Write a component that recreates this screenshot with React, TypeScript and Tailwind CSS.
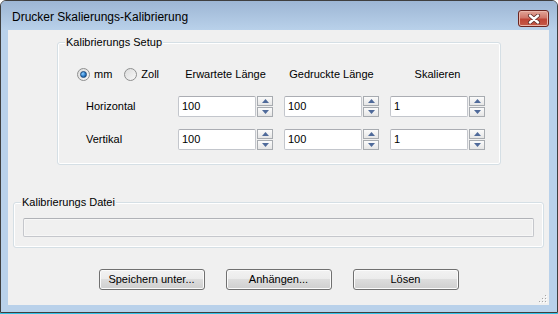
import React from 'react';

function Radio({ checked, label }: { checked?: boolean; label: string }) {
  return (
    <div className="flex items-center gap-[4px]">
      <div className="w-[13px] h-[13px] rounded-full border border-[#8e8f8f] bg-[linear-gradient(135deg,#dcdcdc,#f8f8f8)] flex items-center justify-center">
        {checked && (
          <div className="w-[7px] h-[7px] rounded-full border border-[#1c4a7c] bg-[radial-gradient(circle_at_35%_35%,#8fd0ff,#2a7ccc_55%,#143f6e)]" />
        )}
      </div>
      <span>{label}</span>
    </div>
  );
}

function Arrow({ up }: { up?: boolean }) {
  return (
    <svg width="7" height="4" viewBox="0 0 7 4">
      {up ? <path d="M0 4 L3.5 0 L7 4 Z" fill="#4f6a9a" /> : <path d="M0 0 L3.5 4 L7 0 Z" fill="#4f6a9a" />}
    </svg>
  );
}

function SpinBox({ value }: { value: string }) {
  return (
    <div className="flex items-center gap-[1px] w-[95px]">
      <div className="w-[78px] h-[21px] border border-[#c3c6cc] border-t-[#abadb3] rounded-[2px] bg-white flex items-center pl-[3px]">
        {value}
      </div>
      <div className="w-[16px] h-[21px] flex flex-col gap-[1px]">
        <div className="h-[10px] border border-[#a7abb0] bg-[linear-gradient(#fbfbfb,#e6e6e6)] flex items-center justify-center">
          <Arrow up />
        </div>
        <div className="h-[10px] border border-[#a7abb0] bg-[linear-gradient(#fbfbfb,#e6e6e6)] flex items-center justify-center">
          <Arrow />
        </div>
      </div>
    </div>
  );
}

function Button({ label }: { label: string }) {
  return (
    <button className="w-[106px] h-[21px] border border-[#707070] rounded-[3px] bg-[linear-gradient(#f2f2f2,#ebebeb_50%,#dddddd_50%,#cfcfcf)] shadow-[inset_0_0_0_1px_#fbfbfb] flex items-center justify-center text-black">
      {label}
    </button>
  );
}

export default function App() {
  return (
    <div className="w-[558px] h-[314px] bg-white font-['Liberation_Sans',Arial,sans-serif] text-[11px] leading-[13px] text-black">
      <div className="h-[313px] flex flex-col rounded-t-[6px] border border-[#3f3f3f] bg-[#b9d1ea]">
        {/* title bar */}
        <div className="h-[29px] flex items-start justify-between pt-[9px] pl-[11px] pr-[8px] rounded-t-[5px] bg-[linear-gradient(#9db6d4,#b9d1ea)]">
          <span className="text-[12px] leading-[15px]">Drucker Skalierungs-Kalibrierung</span>
          <div className="w-[31px] h-[17px] rounded-[3px] border border-[#6b2520] bg-[linear-gradient(#e2a598,#d0776a_45%,#bf4536_55%,#c55a48)] shadow-[inset_0_0_0_1px_#eab6ab] flex items-center justify-center">
            <svg width="14" height="10" viewBox="0 0 14 10">
              <path d="M3 1.5 L11 8.5 M11 1.5 L3 8.5" stroke="#5a2a26" strokeWidth="4" strokeLinecap="round" />
              <path d="M3 1.5 L11 8.5 M11 1.5 L3 8.5" stroke="#ffffff" strokeWidth="2.4" strokeLinecap="round" />
            </svg>
          </div>
        </div>

        {/* client area */}
        <div className="relative flex-1 ml-[7px] mr-[8px] mb-[7px] bg-[#f0f0f0] flex flex-col">
          {/* Kalibrierungs Setup */}
          <div className="relative mt-[12px] ml-[49px] w-[444px] h-[123px] border border-[#d5dfe5] rounded-[3px] shadow-[inset_0_0_0_1px_#ffffff] pl-[19px] pt-[20px]">
            <span className="absolute left-[7px] -top-[7px] px-[1px] bg-[#f0f0f0]">Kalibrierungs Setup</span>

            <div className="grid grid-cols-[101px_106px_106px_95px] items-center h-[22px]">
              <div className="flex items-center gap-[12px]">
                <Radio checked label="mm" />
                <Radio label="Zoll" />
              </div>
              <div className="w-[95px] text-center">Erwartete Länge</div>
              <div className="w-[95px] text-center">Gedruckte Länge</div>
              <div className="w-[95px] text-center">Skalieren</div>
            </div>

            <div className="grid grid-cols-[101px_106px_106px_95px] items-center mt-[11px]">
              <div className="pl-[9px]">Horizontal</div>
              <SpinBox value="100" />
              <SpinBox value="100" />
              <SpinBox value="1" />
            </div>

            <div className="grid grid-cols-[101px_106px_106px_95px] items-center mt-[12px]">
              <div className="pl-[9px]">Vertikal</div>
              <SpinBox value="100" />
              <SpinBox value="100" />
              <SpinBox value="1" />
            </div>
          </div>

          {/* Kalibrierungs Datei */}
          <div className="relative mt-[37px] mx-[5px] h-[46px] border border-[#d5dfe5] rounded-[3px] shadow-[inset_0_0_0_1px_#ffffff] pl-[9px] pr-[9px] pt-[15px]">
            <span className="absolute left-[7px] -top-[7px] px-[1px] bg-[#f0f0f0]">Kalibrierungs Datei</span>
            <div className="h-[19px] border border-[#c5c7cc] border-t-[#b0b2b7] rounded-[2px] bg-[#f0f0f0] shadow-[inset_0_0_0_1px_#f7f7f7]" />
          </div>

          {/* buttons */}
          <div className="mt-[21px] flex justify-center gap-[21px]">
            <Button label="Speichern unter..." />
            <Button label="Anhängen..." />
            <Button label="Lösen" />
          </div>

          {/* size grip */}
          <svg className="absolute right-[1px] bottom-[1px]" width="10" height="10" viewBox="0 0 10 10">
            {[
              [7, 1],
              [4, 4],
              [7, 4],
              [1, 7],
              [4, 7],
              [7, 7],
            ].map(([x, y]) => (
              <g key={`${x}-${y}`}>
                <rect x={x + 1} y={y + 1} width="1" height="1" fill="#ffffff" />
                <rect x={x} y={y} width="1" height="1" fill="#a5a5a5" />
              </g>
            ))}
          </svg>
        </div>
      </div>
      <div className="h-[1px] bg-[#33c2e6]" />
    </div>
  );
}
